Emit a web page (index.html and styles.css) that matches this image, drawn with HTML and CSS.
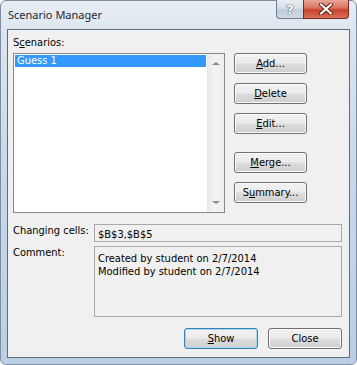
FILE: index.html
```html
<!DOCTYPE html>
<html lang="en">
<head>
    <meta charset="UTF-8">
    <title>Scenario Manager</title>
    <link rel="stylesheet" href="styles.css">
</head>
<body>
    <div class="window">
        <div class="titlebar">
            <span class="title">Scenario Manager</span>
            <div class="caption-buttons">
                <div class="cap help">?</div>
                <div class="cap close">
                    <svg width="16" height="12" viewBox="0 0 16 12">
                        <path d="M3 1.5 L13 10.5 M13 1.5 L3 10.5" stroke="#5a1c14" stroke-width="4" stroke-linecap="round"/>
                        <path d="M3 1.5 L13 10.5 M13 1.5 L3 10.5" stroke="#ffffff" stroke-width="2.2" stroke-linecap="round"/>
                    </svg>
                </div>
            </div>
        </div>

        <div class="client">
            <div class="label">S<u>c</u>enarios:</div>
            <div class="top-row">
                <div class="listbox">
                    <div class="items">
                        <div class="item selected">Guess 1</div>
                    </div>
                    <div class="scrollbar">
                        <span class="arrow up"></span>
                        <span class="arrow down"></span>
                    </div>
                </div>
                <div class="side-buttons">
                    <button><u>A</u>dd...</button>
                    <button><u>D</u>elete</button>
                    <button><u>E</u>dit...</button>
                    <button class="spaced"><u>M</u>erge...</button>
                    <button>S<u>u</u>mmary...</button>
                </div>
            </div>

            <div class="field-row">
                <div class="field-label">Changing cells:</div>
                <div class="field single">$B$3,$B$5</div>
            </div>
            <div class="field-row comment-row">
                <div class="field-label">Comment:</div>
                <div class="field multi">Created by student on 2/7/2014<br>Modified by student on 2/7/2014</div>
            </div>

            <div class="bottom-buttons">
                <button class="default"><u>S</u>how</button>
                <button>Close</button>
            </div>
        </div>
    </div>
</body>
</html>
```

FILE: styles.css
```css
body {
    margin: 0;
    background: #ffffff;
    font-family: "DejaVu Sans Condensed", "Liberation Sans", Arial, sans-serif;
    font-size: 11px;
    color: #000;
}

.window {
    box-sizing: border-box;
    width: 357px;
    height: 365px;
    border: 1px solid #7d8ea3;
    border-radius: 6px;
    background: linear-gradient(to bottom, #e9eef4 0, #dde6ef 28px, #c9d9ea 160px, #b9cfe6 365px);
    display: flex;
    flex-direction: column;
}

.titlebar {
    height: 28px;
    display: flex;
    align-items: flex-start;
    justify-content: space-between;
}

.title {
    font-family: "Noto Sans", "Open Sans", sans-serif;
    font-size: 11px;
    color: #1e2732;
    margin: 6px 0 0 7px;
    line-height: 16px;
}

.caption-buttons {
    display: flex;
    margin-right: 7px;
    margin-top: -1px;
}

.cap {
    height: 19px;
    box-sizing: border-box;
    display: flex;
    align-items: center;
    justify-content: center;
    border: 1px solid #6d7f96;
    border-top: none;
}

.help {
    width: 27px;
    border-radius: 0 0 0 4px;
    border-right: none;
    background: linear-gradient(to bottom, #e8edf2 0, #d6dee7 45%, #c3cdd9 55%, #cfd8e3 100%);
    color: #ffffff;
    font-family: "DejaVu Sans", sans-serif;
    font-weight: bold;
    font-size: 13px;
    text-shadow: 0 0 1px #4a5563, 0 0 1px #4a5563, 0 0 1px #4a5563;
}

.close {
    width: 46px;
    border-radius: 0 0 4px 0;
    border-color: #7a2a1f;
    background: linear-gradient(to bottom, #e8a797 0, #d9715d 45%, #c7422b 55%, #d7705c 100%);
}

.client {
    box-sizing: border-box;
    margin: 0 6px;
    height: 329px;
    border: 1px solid #5b6c7f;
    background: #f0f0f0;
    padding: 6px 6px 0 5px;
}

.label {
    line-height: 13px;
    margin-bottom: 4px;
}

.top-row {
    display: flex;
    gap: 9px;
}

.listbox {
    box-sizing: border-box;
    width: 212px;
    height: 160px;
    border: 1px solid #828790;
    background: #ffffff;
    display: flex;
}

.items {
    flex: 1;
    padding: 1px;
}

.item {
    height: 12px;
    line-height: 12px;
    padding-left: 2px;
}

.item.selected {
    background: #3399ff;
    color: #ffffff;
}

.scrollbar {
    width: 17px;
    background: linear-gradient(to right, #e8e8e8, #f3f3f3 40%, #eeeeee);
    display: flex;
    flex-direction: column;
    justify-content: space-between;
    align-items: center;
    padding: 8px 0;
    box-sizing: border-box;
}

.arrow {
    width: 0;
    height: 0;
    border-left: 4px solid transparent;
    border-right: 4px solid transparent;
}

.arrow.up {
    border-bottom: 3px solid #8a8a8a;
}

.arrow.down {
    border-top: 3px solid #8a8a8a;
}

.side-buttons {
    display: flex;
    flex-direction: column;
    gap: 9px;
}

.side-buttons .spaced {
    margin-top: 9px;
}

button {
    box-sizing: border-box;
    width: 73px;
    height: 21px;
    padding: 0;
    border: 1px solid #707070;
    border-radius: 3px;
    background: linear-gradient(to bottom, #f2f2f2 0, #ebebeb 48%, #dddddd 52%, #cfcfcf 100%);
    box-shadow: inset 0 0 0 1px #fbfbfb;
    font-family: "DejaVu Sans Condensed", "Liberation Sans", Arial, sans-serif;
    font-size: 11px;
    color: #000;
}

.field-row {
    display: flex;
    margin-top: 11px;
}

.comment-row {
    margin-top: 4px;
}

.field-label {
    width: 81px;
    line-height: 13px;
}

.field-row:first-of-type .field-label {
    padding-top: 3px;
}

.field {
    box-sizing: border-box;
    width: 248px;
    border: 1px solid #a9a9a9;
    background: #f0f0f0;
    padding-left: 3px;
    line-height: 13px;
}

.field.single {
    height: 18px;
    padding-top: 3px;
}

.field.multi {
    height: 71px;
    padding-top: 5px;
}

.bottom-buttons {
    display: flex;
    justify-content: flex-end;
    gap: 10px;
    margin-top: 11px;
    padding-right: 1px;
}

.bottom-buttons button {
    width: 74px;
}

button.default {
    border-color: #3c7fb1;
    box-shadow: inset 0 0 0 1px #a5d8f3;
}
```
